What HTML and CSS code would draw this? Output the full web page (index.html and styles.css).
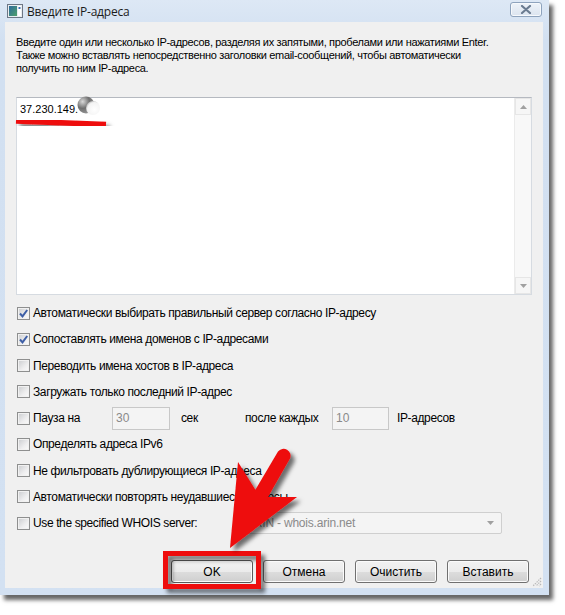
FILE: index.html
```html
<!DOCTYPE html>
<html>
<head>
<meta charset="utf-8">
<link rel="stylesheet" href="styles.css">
</head>
<body>
<div class="window">
  <div class="titlebar">
    <svg class="app-icon" width="16" height="14" viewBox="0 0 16 14">
      <defs>
        <linearGradient id="ig" x1="0" y1="0" x2="1" y2="1">
          <stop offset="0" stop-color="#2c6a9c"/>
          <stop offset="1" stop-color="#4fa06a"/>
        </linearGradient>
      </defs>
      <rect x="0.5" y="0.5" width="15" height="13" fill="#e9edf1" stroke="#6d7785"/>
      <rect x="2" y="2" width="8" height="10" fill="url(#ig)"/>
      <rect x="11" y="2" width="3" height="10" fill="#ffffff"/>
      <rect x="11.5" y="3" width="2" height="2" fill="#3a6fb0"/>
    </svg>
    <span class="title">Введите IP-адреса</span>
    <div class="close-btn">
      <svg width="12" height="9" viewBox="0 0 12 9"><path d="M2 1 L10 8 M10 1 L2 8" stroke="#6a7b90" stroke-width="2.2" stroke-linecap="round"/></svg>
    </div>
  </div>
  <div class="client">
    <p class="desc">Введите один или несколько IP-адресов, разделяя их запятыми, пробелами или нажатиями Enter.<br>Также можно вставлять непосредственно заголовки email-сообщений, чтобы автоматически<br>получить по ним IP-адреса.</p>
    <div class="textarea">
      <div class="ta-content">37.230.149.</div>
      <div class="scrollbar">
        <div class="sb-btn"><svg width="7" height="4" viewBox="0 0 7 4"><path d="M0 4 L3.5 0 L7 4 Z" fill="#a0a0a0"/></svg></div>
        <div class="sb-track"></div>
        <div class="sb-btn"><svg width="7" height="4" viewBox="0 0 7 4"><path d="M0 0 L3.5 4 L7 0 Z" fill="#a0a0a0"/></svg></div>
      </div>
    </div>
    <div class="options">
      <div class="row"><span class="cb"><svg width="11" height="11" viewBox="0 0 11 11"><path d="M2 5.5 L4.5 8.3 L9.2 2" fill="none" stroke="#3d5ea6" stroke-width="2"/></svg></span><span class="lbl">Автоматически выбирать правильный сервер согласно IP-адресу</span></div>
      <div class="row"><span class="cb"><svg width="11" height="11" viewBox="0 0 11 11"><path d="M2 5.5 L4.5 8.3 L9.2 2" fill="none" stroke="#3d5ea6" stroke-width="2"/></svg></span><span class="lbl">Сопоставлять имена доменов с IP-адресами</span></div>
      <div class="row"><span class="cb"></span><span class="lbl">Переводить имена хостов в IP-адреса</span></div>
      <div class="row"><span class="cb"></span><span class="lbl">Загружать только последний IP-адрес</span></div>
      <div class="row"><span class="cb"></span><span class="lbl pause-lbl">Пауза на</span><span class="num num1">30</span><span class="lbl sec">сек</span><span class="lbl after">после каждых</span><span class="num num2">10</span><span class="lbl">IP-адресов</span></div>
      <div class="row"><span class="cb"></span><span class="lbl">Определять адреса IPv6</span></div>
      <div class="row"><span class="cb"></span><span class="lbl">Не фильтровать дублирующиеся IP-адреса</span></div>
      <div class="row"><span class="cb"></span><span class="lbl">Автоматически повторять неудавшиеся запросы</span></div>
      <div class="row"><span class="cb"></span><span class="lbl whois-lbl">Use the specified WHOIS server:</span>
        <div class="combo"><span class="combo-text">ARIN - whois.arin.net</span><svg width="7" height="4" viewBox="0 0 7 4"><path d="M0 0 L3.5 4 L7 0 Z" fill="#a0a0a0"/></svg></div>
      </div>
    </div>
    <div class="buttons">
      <div class="btn btn-default">OK</div>
      <div class="btn">Отмена</div>
      <div class="btn">Очистить</div>
      <div class="btn">Вставить</div>
    </div>
    <svg class="grip" width="11" height="11" viewBox="0 0 11 11">
      <path d="M10 2 L2 10 M10 5 L5 10 M10 8 L8 10" stroke="#b8b8b8" stroke-width="1.2" stroke-dasharray="1.4 1"/>
    </svg>
  </div>
</div>

<svg class="annot" width="565" height="615" viewBox="0 0 565 615">
  <defs>
    <filter id="sh" x="-20%" y="-20%" width="150%" height="150%">
      <feDropShadow dx="4" dy="4" stdDeviation="2.2" flood-color="#000" flood-opacity="0.55"/>
    </filter>
    <radialGradient id="ball" cx="0.3" cy="0.3" r="0.8">
      <stop offset="0" stop-color="#d8d8d8"/>
      <stop offset="0.5" stop-color="#707070"/>
      <stop offset="1" stop-color="#9a9a9a"/>
    </radialGradient>
    <radialGradient id="ball2" cx="0.6" cy="0.6" r="0.7">
      <stop offset="0" stop-color="#ffffff"/>
      <stop offset="0.7" stop-color="#f4f4f4"/>
      <stop offset="1" stop-color="#9c9c9c"/>
    </radialGradient>
  </defs>
  <circle cx="86" cy="105" r="8.5" fill="url(#ball)"/>
  <circle cx="93" cy="108" r="7" fill="url(#ball2)"/>
  <path d="M16 121 L106 124.5" stroke="#ee1111" stroke-width="5.5" filter="url(#sh)"/>
  <rect x="165.5" y="553.5" width="93" height="33" fill="none" stroke="#ee1111" stroke-width="5" filter="url(#sh)"/>
  <path d="M230 548 L238 462 L255.4 489.7 L278 451.5 A7 7 0 0 1 290 458.5 L268 497 L297 497 Z" fill="#ee1111" filter="url(#sh)"/>
</svg>
</body>
</html>
```

FILE: styles.css
```css
* {
  box-sizing: border-box;
}

body {
  margin: 0;
  width: 565px;
  height: 615px;
  background: #ffffff;
  position: relative;
  overflow: hidden;
  font-family: "Liberation Sans", Arial, sans-serif;
  color: #000;
}

.window {
  width: 549px;
  height: 595px;
  background: linear-gradient(#dde8f5, #d2e0f1 40px, #d3e1f2);
  box-shadow: 4px 5px 4px rgba(0, 0, 0, 0.6);
  display: flex;
  flex-direction: column;
  padding: 0 6px 7px 5px;
}

.titlebar {
  height: 22px;
  flex: none;
  display: flex;
  align-items: center;
}

.app-icon {
  margin-left: 2px;
  flex: none;
}

.title {
  margin-left: 4px;
  font-family: "Open Sans", "Noto Sans", sans-serif;
  font-size: 12px;
  color: #1b1b1b;
  flex: 1;
  letter-spacing: -0.2px;
}

.close-btn {
  width: 32px;
  height: 15px;
  margin-right: 1px;
  margin-bottom: 3px;
  border: 1px solid #8ea3bd;
  border-radius: 3px;
  background: linear-gradient(#eef3f9, #dbe4ef);
  box-shadow: inset 0 0 0 1px #f6f9fc;
  display: flex;
  align-items: center;
  justify-content: center;
}

.client {
  flex: 1;
  background: #f0f0f0;
  position: relative;
  padding: 14px 0 0 11px;
  display: flex;
  flex-direction: column;
}

.desc {
  margin: 0;
  font-size: 11px;
  line-height: 13px;
  letter-spacing: -0.33px;
}

.textarea {
  margin-top: 22px;
  width: 516px;
  height: 198px;
  background: #fff;
  border: 1px solid #d6dbe1;
  border-top-color: #b5b9c0;
  display: flex;
}

.ta-content {
  flex: 1;
  padding: 4px 0 0 3px;
  font-size: 11px;
  line-height: 14px;
}

.scrollbar {
  width: 17px;
  display: flex;
  flex-direction: column;
  background: #f8f8f8;
  border-left: 1px solid #ebebeb;
}

.sb-btn {
  height: 17px;
  display: flex;
  align-items: center;
  justify-content: center;
  border: 1px solid #e6e6e6;
  background: #f6f6f6;
}

.sb-track {
  flex: 1;
}

.options {
  margin-top: 5px;
  display: flex;
  flex-direction: column;
}

.row {
  height: 26.25px;
  display: flex;
  align-items: center;
  padding-left: 1px;
}

.cb {
  width: 13px;
  height: 13px;
  flex: none;
  border: 1px solid #8e8f8f;
  background: linear-gradient(135deg, #c9cbce, #eeeeef 60%, #fbfbfb);
  box-shadow: inset 0 0 0 1px #f1f1f1;
  margin-right: 3px;
  display: flex;
  align-items: center;
  justify-content: center;
}

.lbl {
  font-size: 12px;
  letter-spacing: -0.38px;
  white-space: nowrap;
}

.pause-lbl {
  width: 79px;
}

.num {
  height: 23px;
  border: 1px solid #c8c8c8;
  background: #f4f4f4;
  color: #8a8a8a;
  font-size: 12px;
  padding: 3px 0 0 3px;
  flex: none;
}

.num1 {
  width: 58px;
}

.sec {
  margin-left: 11px;
  width: 64px;
}

.after {
  width: 87px;
}

.num2 {
  width: 57px;
  margin-right: 8px;
}

.whois-lbl {
  width: 207px;
}

.combo {
  width: 262px;
  height: 22px;
  border: 1px solid #cfcfcf;
  border-radius: 2px;
  background: #f4f4f4;
  display: flex;
  align-items: center;
  justify-content: space-between;
  padding: 0 7px 0 5px;
}

.combo-text {
  font-size: 12px;
  letter-spacing: -0.2px;
  color: #8a8a8a;
}

.buttons {
  margin-top: 24px;
  margin-left: 155px;
  display: flex;
  gap: 10px;
}

.btn {
  width: 82px;
  height: 23px;
  border: 1px solid #707070;
  border-radius: 3px;
  background: linear-gradient(#f2f2f2 0%, #ebebeb 50%, #dddddd 50%, #cfcfcf 100%);
  box-shadow: inset 0 0 0 1px #fbfbfb;
  font-size: 12px;
  display: flex;
  align-items: center;
  justify-content: center;
}

.btn-default {
  border-color: #5a5a5a;
}

.grip {
  position: absolute;
  right: 1px;
  bottom: 1px;
}

.annot {
  position: absolute;
  left: 0;
  top: 0;
  pointer-events: none;
}
```
